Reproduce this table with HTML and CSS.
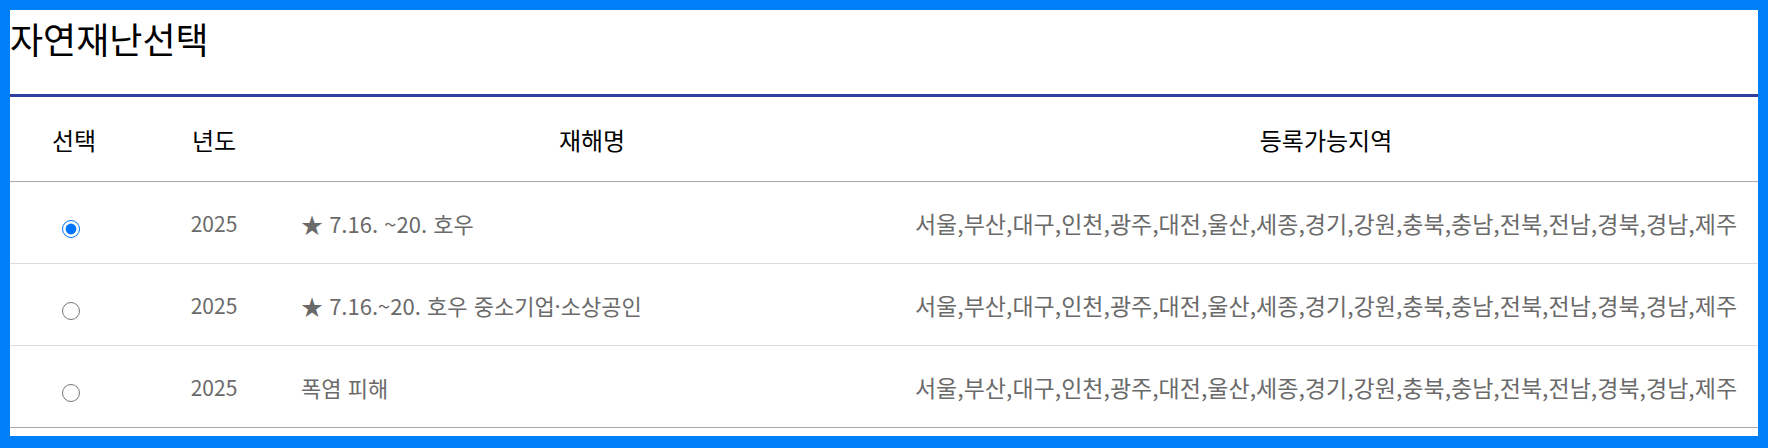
FILE: index.html
```html
<!DOCTYPE html>
<html lang="ko">
<head>
<meta charset="utf-8">
<title>자연재난선택</title>
<link rel="stylesheet" href="styles.css">
</head>
<body>
<div class="panel">
  <h2 class="title">자연재난선택</h2>
  <table class="grid">
    <colgroup>
      <col class="c-sel"><col class="c-year"><col class="c-name"><col class="c-area">
    </colgroup>
    <thead>
      <tr>
        <th>선택</th>
        <th>년도</th>
        <th>재해명</th>
        <th>등록가능지역</th>
      </tr>
    </thead>
    <tbody>
      <tr>
        <td class="sel"><input type="radio" name="dis" class="radio" checked></td>
        <td class="year">2025</td>
        <td class="name">★ 7.16. ~20. 호우</td>
        <td class="area">서울,부산,대구,인천,광주,대전,울산,세종,경기,강원,충북,충남,전북,전남,경북,경남,제주</td>
      </tr>
      <tr>
        <td class="sel"><input type="radio" name="dis" class="radio"></td>
        <td class="year">2025</td>
        <td class="name">★ 7.16.~20. 호우 중소기업·소상공인</td>
        <td class="area">서울,부산,대구,인천,광주,대전,울산,세종,경기,강원,충북,충남,전북,전남,경북,경남,제주</td>
      </tr>
      <tr class="last">
        <td class="sel"><input type="radio" name="dis" class="radio"></td>
        <td class="year">2025</td>
        <td class="name">폭염 피해</td>
        <td class="area">서울,부산,대구,인천,광주,대전,울산,세종,경기,강원,충북,충남,전북,전남,경북,경남,제주</td>
      </tr>
    </tbody>
  </table>
</div>
</body>
</html>
```
FILE: styles.css
```css
html, body {
  margin: 0;
  padding: 0;
}
body {
  background: #0080f8;
  padding: 10px 10px 12px 10px;
  font-family: "Noto Sans CJK KR", "Noto Sans", sans-serif;
}
.panel {
  background: #fff;
  height: 426px;
  overflow: hidden;
}
.title {
  margin: 0;
  height: 87px;
  box-sizing: border-box;
  padding-top: 2px;
  font-size: 36px;
  font-weight: normal;
  line-height: 52px;
  color: #000;
  border-bottom: 3px solid #2f3f9f;
}
.grid {
  width: 100%;
  border-collapse: collapse;
  table-layout: fixed;
}
.c-sel { width: 128px; }
.c-year { width: 152px; }
.c-name { width: 604px; }
.grid th {
  height: 84px;
  padding: 0;
  font-size: 24px;
  font-weight: normal;
  color: #000;
  text-align: center;
  vertical-align: middle;
  border-bottom: 1px solid #a9a9a9;
}
.grid td {
  height: 81px;
  padding: 0;
  font-size: 22px;
  color: #6a6a6a;
  vertical-align: middle;
  border-bottom: 1px solid #dcdcdc;
}
.grid tr.last td {
  border-bottom: 1px solid #a9a9a9;
}
.sel, .year { text-align: center; }
.grid td.year { font-size: 21px; }
.grid td.name { text-align: left; padding-left: 11px; }
.grid td.area { text-align: center; white-space: nowrap; font-size: 23px; }
.radio {
  width: 18px;
  height: 18px;
  margin: 5px 6px 0 0;
  vertical-align: middle;
}
```
